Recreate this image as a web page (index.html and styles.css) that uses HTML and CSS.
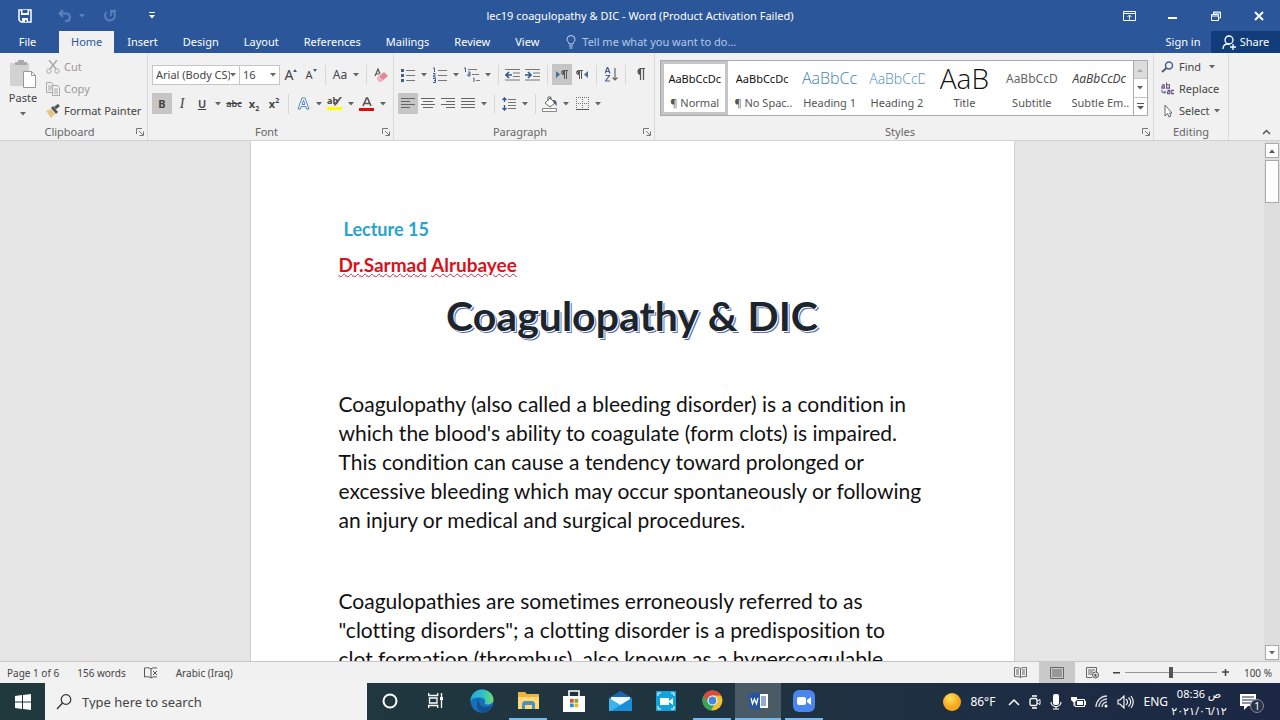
FILE: index.html
```html
<!DOCTYPE html>
<html lang="en">
<head>
<meta charset="utf-8">
<title>lec19 coagulopathy &amp; DIC - Word</title>
<link rel="stylesheet" href="styles.css">
</head>
<body>
<svg class="sprite" aria-hidden="true">
  <symbol id="caret" viewBox="0 0 6 4"><path d="M0 0h6L3 3.5z"/></symbol>
  <symbol id="launch" viewBox="0 0 8 8"><path d="M.5 6V.5H6M3 3l4 4M7.500 3.500v4h-4" fill="none" stroke="#777"/></symbol>
</svg>

<header class="top">
  <div class="titlebar">
    <div class="quick">
      <button class="q-save" aria-label="Save"><svg width="14" height="14" viewBox="0 0 14 14"><path d="M1 1h12v12H3L1 11z" fill="none" stroke="#fff" stroke-width="1.500"/><path d="M3 1h8v5H3zM4 9h6v4H4z" fill="#fff"/><path d="M4.500 1h5v3h-5zM7 11h1.500v2H7z" fill="#2b579a"/></svg></button>
      <button class="q-undo dim" aria-label="Undo"><svg width="14" height="14" viewBox="0 0 14 14"><path d="M5 1L1.500 4.500 5 8M2 4.500h6c5 0 5 7 1 7.500H7" fill="none" stroke="currentColor" stroke-width="2"/></svg><svg class="caret" width="6" height="4"><use href="#caret"/></svg></button>
      <button class="q-redo dim" aria-label="Repeat"><svg width="14" height="14" viewBox="0 0 14 14"><path d="M3.500 3a5 5 0 1 0 6.500-.5M8 7V2h5" fill="none" stroke="currentColor" stroke-width="1.800"/></svg></button>
      <button class="q-more" aria-label="Customize"><svg width="6" height="7" viewBox="0 0 6 7"><path d="M0 0h6v1H0zM0 3h6L3 6.500z" fill="#fff"/></svg></button>
    </div>
    <h1 class="title">lec19 coagulopathy &amp; DIC - Word (Product Activation Failed)</h1>
    <div class="winctl">
      <button aria-label="Ribbon options"><svg width="13" height="10" viewBox="0 0 13 10"><path d="M.5.5h12v9H.5zM.5 2.500h12M6.500 8.500v-4M4.500 6l2-2 2 2" fill="none" stroke="#fff"/></svg></button>
      <button aria-label="Minimize"><svg width="9" height="10" viewBox="0 0 9 10"><path d="M0 6h9v2H0z" fill="#fff"/></svg></button>
      <button aria-label="Restore"><svg width="10" height="10" viewBox="0 0 10 10"><path d="M.5 3.500h7v6h-7zM.5 5h7M2.500 3V1h7v6H8M2.500 2h7" fill="none" stroke="#fff"/></svg></button>
      <button aria-label="Close"><svg width="10" height="10" viewBox="0 0 10 10"><path d="M1 1l8 8M9 1L1 9" stroke="#fff" stroke-width="2"/></svg></button>
    </div>
  </div>
  <nav class="tabs">
    <button class="tab file">File</button>
    <button class="tab active">Home</button>
    <button class="tab">Insert</button>
    <button class="tab">Design</button>
    <button class="tab">Layout</button>
    <button class="tab">References</button>
    <button class="tab">Mailings</button>
    <button class="tab">Review</button>
    <button class="tab">View</button>
    <label class="tell"><svg width="10" height="14" viewBox="0 0 10 14"><path d="M3 9C3 7 1 6.500 1 4.500a4 4 0 0 1 8 0C9 6.500 7 7 7 9zM3 11h4M3.500 13h3" fill="none" stroke="#c3d3ec"/></svg><input type="text" placeholder="Tell me what you want to do..."></label>
    <button class="signin">Sign in</button>
    <button class="share"><svg width="15" height="15" viewBox="0 0 15 15"><circle cx="7" cy="5" r="4" fill="none" stroke="#fff" stroke-width="1.300"/><path d="M1 14c0-3 2-5 5-5h2M8 12h6M11 9v6" fill="none" stroke="#fff" stroke-width="1.300"/></svg>Share</button>
  </nav>
</header>

<section class="ribbon">
  <div class="group clipboard">
    <div class="body clip">
      <button class="paste"><svg width="27" height="28" viewBox="0 0 27 28"><path d="M0 3h19v23H0z" fill="#d4d1d4"/><path d="M5 5V2h3V0h6v2h3v3z" fill="#aaa"/><path d="M13.500 11.500h8l4 4v12h-12z" fill="#fff" stroke="#999"/><path d="M21.500 11.500v4h4" fill="none" stroke="#999"/></svg><span>Paste</span><svg class="caret" width="6" height="4"><use href="#caret"/></svg></button>
      <div class="stack">
        <button class="off"><svg width="14" height="14" viewBox="0 0 14 14"><path d="M3 0l7 9M11 0L4 9" stroke="#aaa" stroke-width="1.500"/><circle cx="3" cy="11" r="2.200" fill="none" stroke="#aaa"/><circle cx="11" cy="11" r="2.200" fill="none" stroke="#aaa"/></svg>Cut</button>
        <button class="off"><svg width="14" height="14" viewBox="0 0 14 14"><path d="M.5.5h5l2 2v8h-7zM2 4h4M2 6h4M2 8h3" fill="none" stroke="#aaa"/><path d="M6.500 3.500h5l2 2v8h-7z" fill="#f1f1f1" stroke="#aaa"/><path d="M8 7h4M8 9h4M8 11h4" stroke="#aaa"/></svg>Copy</button>
        <button><svg width="14" height="14" viewBox="0 0 14 14"><path d="M0 7l5-2 4 5-4 4z" fill="#e7c67f"/><path d="M5 4l2-2 5 6-2 2z" fill="#555"/><path d="M9 4l4-3" stroke="#555" stroke-width="3"/></svg>Format Painter</button>
      </div>
    </div>
    <div class="caption"><span>Clipboard</span><button aria-label="Clipboard settings"><svg width="8" height="8"><use href="#launch"/></svg></button></div>
  </div>

  <div class="group font">
    <div class="body">
      <div class="row">
        <span class="pick face"><select aria-label="Font"><option>Arial (Body CS)</option></select><svg class="caret" width="6" height="4"><use href="#caret"/></svg></span>
        <span class="pick size"><select aria-label="Font size"><option>16</option></select><svg class="caret" width="6" height="4"><use href="#caret"/></svg></span>
        <button class="ic glyph" aria-label="Grow font"><span class="big">A</span><svg width="4" height="12" viewBox="0 0 4 12"><path d="M0 3h4L2 0z" fill="#3a5f95"/></svg></button>
        <button class="ic glyph" aria-label="Shrink font"><span>A</span><svg width="4" height="12" viewBox="0 0 4 12"><path d="M0 0h4L2 3z" fill="#3a5f95"/></svg></button>
        <i class="sep"></i>
        <button class="ic case">Aa</button><button class="dd" aria-label="Case"><svg class="caret" width="6" height="4"><use href="#caret"/></svg></button>
        <i class="sep"></i>
        <button class="ic" aria-label="Clear formatting"><svg width="14" height="14" viewBox="0 0 14 14"><path d="M1 8L4 1l2 5M2 6h3" fill="none" stroke="#555" stroke-width="1.200"/><path d="M3 10l7-6 4 4-7 6H5z" fill="#e8869b"/><path d="M3 10l2-2 4 4-2 2H5z" fill="#f3b6c1"/></svg></button>
      </div>
      <div class="row">
        <button class="ic on"><b>B</b></button>
        <button class="ic serif"><i>I</i></button>
        <button class="ic semi"><u>U</u></button><button class="dd" aria-label="Underline style"><svg class="caret" width="6" height="4"><use href="#caret"/></svg></button>
        <button class="ic small semi"><s>abc</s></button>
        <button class="ic"><b>x<sub>2</sub></b></button>
        <button class="ic"><b>x<sup>2</sup></b></button>
        <i class="sep"></i>
        <button class="ic" aria-label="Text effects"><svg width="13" height="13" viewBox="0 0 13 13"><path d="M1 12L5 1h3l4 11H9.500L9 9.500H4L3.500 12zM5 7.500h3L6.500 3z" fill="#fff" stroke="#5584bd"/></svg></button><button class="dd" aria-label="Effects"><svg class="caret" width="6" height="4"><use href="#caret"/></svg></button>
        <button class="ic small hl" aria-label="Highlight"><span>ab</span><svg width="16" height="14" viewBox="0 0 16 14"><path d="M15 0L9 8l-2 1 .5-2.500L13 0z" fill="#555"/><path d="M0 10h15v3H0z" fill="#ff0"/></svg></button><button class="dd" aria-label="Highlight color"><svg class="caret" width="6" height="4"><use href="#caret"/></svg></button>
        <button class="ic" aria-label="Font color"><svg width="16" height="16" viewBox="0 0 16 16"><path d="M4 10L7.500 2h1L12 10M5.500 7.500h5" fill="none" stroke="#555" stroke-width="1.600"/><path d="M0 12h15v3H0z" fill="#e00b0b"/></svg></button><button class="dd" aria-label="Font colors"><svg class="caret" width="6" height="4"><use href="#caret"/></svg></button>
      </div>
    </div>
    <div class="caption"><span>Font</span><button aria-label="Font settings"><svg width="8" height="8"><use href="#launch"/></svg></button></div>
  </div>

  <div class="group para">
    <div class="body">
      <div class="row">
        <button class="ic" aria-label="Bullets"><svg width="14" height="14" viewBox="0 0 14 14"><path d="M0 1h3v3H0zM0 6h3v3H0zM0 11h3v3H0z" fill="#44618c"/><path d="M5 2.500h9M5 7.500h9M5 12.500h9" stroke="#777"/></svg></button><button class="dd" aria-label="Bullet styles"><svg class="caret" width="6" height="4"><use href="#caret"/></svg></button>
        <button class="ic" aria-label="Numbering"><svg width="14" height="16" viewBox="0 0 14 16"><path d="M0 1h1.500v4M0 6.500h2v2H.5v1.500H3M0 11.500h2.500v4H0M1 13.500h1.500" fill="none" stroke="#44618c"/><path d="M5 3.500h9M5 8.500h9M5 13.500h9" stroke="#777"/></svg></button><button class="dd" aria-label="Number styles"><svg class="caret" width="6" height="4"><use href="#caret"/></svg></button>
        <button class="ic" aria-label="Multilevel list"><svg width="16" height="16" viewBox="0 0 16 16"><path d="M0 1h1.500v4M4 5h2v4H4V7h2M9 11h1v4" fill="none" stroke="#44618c"/><path d="M4 2.500h9M8 7.500h7M12 13.500h4" stroke="#777"/></svg></button><button class="dd" aria-label="List styles"><svg class="caret" width="6" height="4"><use href="#caret"/></svg></button>
        <i class="sep"></i>
        <button class="ic" aria-label="Decrease indent"><svg width="16" height="12" viewBox="0 0 16 12"><path d="M0 .5h15M8 4h7M8 7.500h7M0 11h15" stroke="#777"/><path d="M7 6H1M4 3L1 6l3 3" fill="none" stroke="#31598f" stroke-width="1.600"/></svg></button>
        <button class="ic" aria-label="Increase indent"><svg width="16" height="12" viewBox="0 0 16 12"><path d="M0 .5h15M8 4h7M8 7.500h7M0 11h15" stroke="#777"/><path d="M0 6h6M3 3l3 3-3 3" fill="none" stroke="#31598f" stroke-width="1.600"/></svg></button>
        <i class="sep"></i>
        <button class="ic on" aria-label="Left to right"><svg width="13" height="10" viewBox="0 0 13 10"><path d="M0 1l4 3.500L0 8z" fill="#44709f"/><path d="M12 .5H7.500a2 2 0 0 0 0 4h1V1M8.500 1v8M10.500 1v8" fill="none" stroke="#555"/><path d="M6 1h3v3.500H7z" fill="#555"/></svg></button>
        <button class="ic" aria-label="Right to left"><svg width="13" height="10" viewBox="0 0 13 10"><path d="M12 1L8 4.500 12 8z" fill="#44709f"/><path d="M7 .5H2.500a2 2 0 0 0 0 4M3.500 1v8M5.500 1v8" fill="none" stroke="#555"/><path d="M1 1h3v3.500H2z" fill="#555"/></svg></button>
        <i class="sep"></i>
        <button class="ic" aria-label="Sort"><svg width="13" height="15" viewBox="0 0 13 15"><path d="M0 6.500L2.500 0 5 6.500M1 4.500h3M.5 8.500h4L.5 14h4.500" fill="none" stroke="#44618c" stroke-width="1.200"/><path d="M10 1v12M7.500 10.500L10 13l2.500-2.500" fill="none" stroke="#666" stroke-width="1.200"/></svg></button>
        <i class="sep"></i>
        <button class="ic" aria-label="Show marks"><svg width="9" height="13" viewBox="0 0 9 13"><path d="M9 .5H4M4.500 1v11M7.500 1v11" fill="none" stroke="#555" stroke-width="1.200"/><path d="M5 0v7a3.500 3.500 0 0 1 0-7z" fill="#555"/></svg></button>
      </div>
      <div class="row">
        <button class="ic on" aria-label="Align left"><svg width="14" height="11" viewBox="0 0 14 11"><path d="M0 .5h14M0 3.500h9M0 6.500h14M0 9.500h9" stroke="#666"/></svg></button>
        <button class="ic" aria-label="Center"><svg width="14" height="11" viewBox="0 0 14 11"><path d="M0 .5h14M2 3.500h10M0 6.500h14M2 9.500h10" stroke="#666"/></svg></button>
        <button class="ic" aria-label="Align right"><svg width="14" height="11" viewBox="0 0 14 11"><path d="M0 .5h14M5 3.500h9M0 6.500h14M5 9.500h9" stroke="#666"/></svg></button>
        <button class="ic" aria-label="Justify"><svg width="14" height="11" viewBox="0 0 14 11"><path d="M0 .5h14M0 3.500h14M0 6.500h14M0 9.500h14" stroke="#666"/></svg></button><button class="dd" aria-label="Justify options"><svg class="caret" width="6" height="4"><use href="#caret"/></svg></button>
        <i class="sep"></i>
        <button class="ic" aria-label="Line spacing"><svg width="14" height="14" viewBox="0 0 14 14"><path d="M2.500 1v4M.5 3l2-2 2 2M2.500 8v5M.5 11l2 2 2-2" fill="none" stroke="#31598f" stroke-width="1.300"/><path d="M6 2.500h8M6 5.500h8M6 8.500h8M6 11.500h8" stroke="#777"/></svg></button><button class="dd" aria-label="Spacing options"><svg class="caret" width="6" height="4"><use href="#caret"/></svg></button>
        <i class="sep"></i>
        <button class="ic" aria-label="Shading"><svg width="16" height="16" viewBox="0 0 16 16"><path d="M3 7l5-5 5 5-5 4zM6 5V1h3v3" fill="#fff" stroke="#666"/><path d="M11 4c4 0 4 3 3.500 6C13 9 13 7 11 6z" fill="#44618c"/><path d="M.5 12.500h14v3H.5z" fill="#fff" stroke="#888"/></svg></button><button class="dd" aria-label="Shading colors"><svg class="caret" width="6" height="4"><use href="#caret"/></svg></button>
        <button class="ic" aria-label="Borders"><svg width="13" height="13" viewBox="0 0 13 13"><path d="M0 .5h13M0 6.500h13M.5 0v13M6.500 0v13M12.500 0v13" fill="none" stroke="#777" stroke-dasharray="1 1"/><path d="M0 12.500h13" stroke="#555"/></svg></button><button class="dd" aria-label="Border options"><svg class="caret" width="6" height="4"><use href="#caret"/></svg></button>
      </div>
    </div>
    <div class="caption"><span>Paragraph</span><button aria-label="Paragraph settings"><svg width="8" height="8"><use href="#launch"/></svg></button></div>
  </div>

  <div class="group styles">
    <div class="gallery">
      <button class="style sel"><span class="sample">AaBbCcDc</span><span>¶ Normal</span></button>
      <button class="style"><span class="sample">AaBbCcDc</span><span>¶ No Spac...</span></button>
      <button class="style"><span class="sample h1s">AaBbCc</span><span>Heading 1</span></button>
      <button class="style"><span class="sample h2s">AaBbCcD</span><span>Heading 2</span></button>
      <button class="style"><span class="sample ttl">AaB</span><span>Title</span></button>
      <button class="style"><span class="sample sub">AaBbCcD</span><span>Subtitle</span></button>
      <button class="style"><span class="sample em">AaBbCcDc</span><span>Subtle Em...</span></button>
      <div class="gscroll">
        <button class="gup" aria-label="Previous styles"><svg width="6" height="4" viewBox="0 0 6 4"><path d="M0 4h6L3 1z" fill="#aaa"/></svg></button>
        <button aria-label="Next styles"><svg class="caret" width="6" height="4"><use href="#caret"/></svg></button>
        <button aria-label="More styles"><svg width="7" height="7" viewBox="0 0 7 7"><path d="M0 0h7v1H0zM0 3h7L3.500 6.500z" fill="#555"/></svg></button>
      </div>
    </div>
    <div class="caption"><span>Styles</span><button aria-label="Styles settings"><svg width="8" height="8"><use href="#launch"/></svg></button></div>
  </div>

  <div class="group editing">
    <div class="stack">
      <button><svg width="14" height="12" viewBox="0 0 14 12"><circle cx="8" cy="4.500" r="3.500" fill="none" stroke="#44618c" stroke-width="1.500"/><path d="M5.500 7L1 11" stroke="#44618c" stroke-width="2"/></svg><span class="find">Find</span><svg class="caret" width="6" height="4"><use href="#caret"/></svg></button>
      <button><svg width="14" height="14" viewBox="0 0 15 14"><path d="M1 2.500h2.500V6H1V4h2.500M6 0v6h3V2.500H6M7 8.500h2.500V12H7v-2h2.500M14 8.500h-2.500V12H14" fill="none" stroke="#6d4f86" stroke-width="1.200"/><path d="M1 8v2.500h4M3.500 9l1.500 1.500L3.500 12" fill="none" stroke="#31598f"/></svg>Replace</button>
      <button><svg width="14" height="14" viewBox="0 0 14 14"><path d="M4 1v11l2.500-2.500L8 13l2-1-1.500-3H11z" fill="#fff" stroke="#666"/></svg>Select<svg class="caret" width="6" height="4"><use href="#caret"/></svg></button>
    </div>
    <div class="caption"><span>Editing</span></div>
  </div>
  <div class="rest"><button aria-label="Collapse ribbon"><svg width="9" height="6" viewBox="0 0 9 6"><path d="M1 5l3.500-3.500L8 5" fill="none" stroke="#555" stroke-width="1.500"/></svg></button></div>
</section>

<main class="work">
  <div class="canvas">
    <article class="page">
      <p class="lecture">Lecture 15</p>
      <p class="author"><span>Dr.Sarmad</span> <span>Alrubayee</span></p>
      <h2>Coagulopathy &amp; DIC</h2>
      <p class="text">Coagulopathy (also called a bleeding disorder) is a condition in<br>which the blood's ability to coagulate (form clots) is impaired.<br>This condition can cause a tendency toward prolonged or<br>excessive bleeding which may occur spontaneously or following<br>an injury or medical and surgical procedures.</p>
      <p class="text">Coagulopathies are sometimes erroneously referred to as<br>"clotting disorders"; a clotting disorder is a predisposition to<br>clot formation (thrombus), also known as a hypercoagulable</p>
    </article>
  </div>
  <div class="scroll">
    <button aria-label="Scroll up"><svg width="6" height="4" viewBox="0 0 6 4"><path d="M0 4h6L3 .5z" fill="#555"/></svg></button>
    <div class="thumb"></div>
    <button class="down" aria-label="Scroll down"><svg class="caret" width="6" height="4"><use href="#caret"/></svg></button>
  </div>
</main>

<footer class="status">
  <span>Page 1 of 6</span>
  <span>156 words</span>
  <svg width="14" height="12" viewBox="0 0 14 12"><path d="M7 2C5 .5 3 .5.500 1v9C3 9.500 5 9.500 7 11zM7 2c1-1 3-1.500 6-1M7 11c1-1 3-1.500 6-1M9 4l4 4M13 4L9 8" fill="none" stroke="#555"/></svg>
  <span>Arabic (Iraq)</span>
  <div class="views">
    <button aria-label="Read mode"><svg width="13" height="11" viewBox="0 0 13 11"><path d="M6.500 1.500C5 .5 3 .5.500.5v9c2.500 0 4.500 0 6 1 1.500-1 3.500-1 6-1v-9c-2.500 0-4.500 0-6 1zv9M2 3h3M2 5h3M2 7h3M8 3h3M8 5h3M8 7h3" fill="none" stroke="#666"/></svg></button>
    <button class="cur" aria-label="Print layout"><svg width="14" height="12" viewBox="0 0 14 12"><path d="M.5.500h13v11H.5zM2 3h10M2 5h10M2 7h10M2 9h10" fill="none" stroke="#666"/></svg></button>
    <button aria-label="Web layout"><svg width="14" height="12" viewBox="0 0 14 12"><path d="M6 10.500H.5V.5h10V5M2 3h7M2 5h5M2 7h4" fill="none" stroke="#666"/><circle cx="9.500" cy="8" r="3" fill="#eee" stroke="#555"/><path d="M8 7h2l1 2-2 1z" fill="#555"/></svg></button>
  </div>
  <div class="zoom">
    <button aria-label="Zoom out"><svg width="7" height="7" viewBox="0 0 7 7"><path d="M0 3h7v1.500H0z" fill="#444"/></svg></button>
    <input type="range" aria-label="Zoom" min="0" max="100" value="50">
    <button aria-label="Zoom in"><svg width="7" height="7" viewBox="0 0 7 7"><path d="M0 3h7M3.500 0v7" stroke="#444" stroke-width="1.500"/></svg></button>
    <span class="pct">100 %</span>
  </div>
</footer>

<div class="taskbar">
  <button class="start" aria-label="Start"><svg width="16" height="16" viewBox="0 0 16 16"><path d="M0 2l7-1v6.500H0zM8 1l8-1v7.500H8zM0 8.500h7V15l-7-1zM8 8.500h8V16l-8-1z" fill="#fff"/></svg></button>
  <label class="search"><svg width="16" height="16" viewBox="0 0 16 16"><circle cx="10" cy="5.500" r="4.800" fill="none" stroke="#333" stroke-width="1.200"/><path d="M6.500 9L1 15" stroke="#333" stroke-width="1.300"/></svg><input type="text" placeholder="Type here to search"></label>
  <div class="apps">
    <button aria-label="Cortana"><svg width="16" height="16" viewBox="0 0 16 16"><circle cx="8" cy="8" r="6.500" fill="none" stroke="#fff" stroke-width="2"/></svg></button>
    <button aria-label="Task view"><svg width="16" height="15" viewBox="0 0 16 15"><path d="M.7 0v2.500h9V0M.7 15v-2.500h9V15M1.500 5h7.500v5H1.500zM13.500 0v15" fill="none" stroke="#fff" stroke-width="1.300"/><path d="M12 4h3v3h-3z" fill="#fff"/></svg></button>
    <button aria-label="Edge"><svg width="24" height="24" viewBox="0 0 24 24"><defs><linearGradient id="eg" x1="0" y1="0" x2="1" y2="0"><stop offset="0" stop-color="#2aa7df"/><stop offset=".6" stop-color="#35c1c0"/><stop offset="1" stop-color="#74dc62"/></linearGradient></defs><circle cx="12" cy="12" r="11.500" fill="#1671bd"/><path d="M.5 12C1 5 6 .5 12 .5S23.500 5 23.500 11c0 4-7 6-9 3.500 2-2 0-6-4-6C6 8 2 9 .5 12z" fill="url(#eg)"/><path d="M10 9c-3 4 0 9 5 9 3 0 5-1 7-2-2 5-6 7.500-10 7.500C6 22 5 13 10 9z" fill="#174f94"/></svg></button>
    <button class="run" aria-label="File Explorer"><svg width="21" height="19" viewBox="0 0 21 19"><path d="M0 1h7l2 2h12v15H0z" fill="#eeb43b"/><path d="M0 6h21v12H0z" fill="#ffda73"/><path d="M4 18v-6l2-2h9l2 2v6h-3v-4H7v4z" fill="#4c91bf"/></svg></button>
    <button aria-label="Store"><svg width="22" height="22" viewBox="0 0 22 22"><path d="M6 7V1h10v6" fill="none" stroke="#fff" stroke-width="1.600"/><path d="M0 6h22v16H0z" fill="#fff"/><path d="M7 9h3.700v3.700H7z" fill="#e3502a"/><path d="M11.500 9h3.700v3.700h-3.700z" fill="#78ad29"/><path d="M7 13.500h3.700v3.700H7z" fill="#2195cf"/><path d="M11.500 13.500h3.700v3.700h-3.700z" fill="#f2b21d"/></svg></button>
    <button aria-label="Mail"><svg width="23" height="20" viewBox="0 0 23 20"><path d="M0 7l11.500-7L23 7v12H0z" fill="#1666b3"/><path d="M2 6h19v10H2z" fill="#eef7fc"/><path d="M0 7l11.500 7L23 7v13H0z" fill="#39b4ed"/><path d="M23 7v13H2z" fill="#178fd8"/></svg></button>
    <button aria-label="Camera meeting"><svg width="20" height="20" viewBox="0 0 20 20"><path d="M0 0h20v20H0z" fill="#12a2dc"/><path d="M4 7h9v7H4zM13 10l4-3v7l-4-3z" fill="#fff"/><path d="M2 5V2h3M15 2h3v3M2 15v3h3M15 18h3v-3" fill="none" stroke="#fff"/></svg></button>
    <button class="run" aria-label="Chrome"><svg width="21" height="21" viewBox="0 0 21 21"><circle cx="10.500" cy="10.500" r="10" fill="#eebf32"/><path d="M10.500 10.500L1.800 5.500A10 10 0 0 0 9 20.400L14 12z" fill="#3ca35b"/><path d="M1.800 5.500A10 10 0 0 1 19.200 5.500H10.500l-4 7z" fill="#dd4a3b"/><circle cx="10.500" cy="10.500" r="5" fill="#fff"/><circle cx="10.500" cy="10.500" r="3.900" fill="#4285e5"/></svg></button>
    <button class="run cur" aria-label="Word"><svg width="19" height="18" viewBox="0 0 19 18"><path d="M10 2h9v14h-9z" fill="#fff"/><path d="M12 5h5M12 7h5M12 9h5M12 11h5M12 13h5" stroke="#2b579a"/><path d="M0 2l11-2v18L0 16z" fill="#2454a3"/><path d="M2 6l1.500 6L5.500 7l2 5L9 6" fill="none" stroke="#fff" stroke-width="1.300"/></svg></button>
    <button class="run" aria-label="Zoom"><svg width="22" height="22" viewBox="0 0 22 22"><rect width="22" height="22" rx="6" fill="#4a86ed"/><rect x="4" y="7" width="9" height="8" rx="2" fill="#fff"/><path d="M14 10l4-3v8l-4-3z" fill="#fff"/></svg></button>
  </div>
  <div class="tray">
    <svg width="18" height="18" viewBox="0 0 18 18"><defs><radialGradient id="sn" cx=".4" cy=".3"><stop offset="0" stop-color="#ffe25c"/><stop offset="1" stop-color="#f8a61b"/></radialGradient></defs><circle cx="9" cy="9" r="9" fill="url(#sn)"/></svg>
    <span class="temp">86°F</span>
    <svg width="12" height="8" viewBox="0 0 12 8"><path d="M1 7l5-5 5 5" fill="none" stroke="#fff" stroke-width="1.500"/></svg>
    <svg width="12" height="14" viewBox="0 0 12 14"><path d="M3 1h5M3 13h5" stroke="#fff" stroke-width="1.300"/><rect x="1" y="3.500" width="7" height="7" rx="1.500" fill="none" stroke="#fff" stroke-width="1.300"/><path d="M8 6l3-1.500v5L8 8" fill="none" stroke="#fff"/></svg>
    <svg width="12" height="16" viewBox="0 0 12 16"><rect x="3" width="6" height="11" rx="2" fill="#fff"/><path d="M1 8c0 6 10 6 10 0M6 12v3M3 15h6" fill="none" stroke="#fff" stroke-width="1.200"/></svg>
    <svg width="15" height="12" viewBox="0 0 15 12"><path d="M3.500 3.500h10v7H4z" fill="none" stroke="#fff"/><path d="M6 5h6v4H6zM14 5h1v4h-1zM0 1h6v3L4 6H2L0 4z" fill="#fff"/><path d="M3 6v4" stroke="#fff"/></svg>
    <svg width="13" height="13" viewBox="0 0 13 13"><path d="M1 12A11 11 0 0 1 12 1M4 12a8 8 0 0 1 8-8M7 12a5 5 0 0 1 5-5" fill="none" stroke="#d5dae0" stroke-width="1.300"/><circle cx="11" cy="11" r="1.500" fill="#fff"/></svg>
    <svg width="17" height="14" viewBox="0 0 17 14"><path d="M1 5h2l4-4v12L3 9H1zM9 4c2 2 2 4 0 6M11.500 2.500c3 3 3 6 0 9M14 1c3 4 3 8 0 12" fill="none" stroke="#fff" stroke-width="1.100"/></svg>
    <span class="lang">ENG</span>
    <div class="clock"><span>08:36 ص</span><span>٢٠٢١/٠٦/١٢</span></div>
    <div class="note"><svg width="16" height="16" viewBox="0 0 16 16"><path d="M0 0h16v12H8l-4 4v-4H0z" fill="#fff"/><path d="M2 3h12M2 6h12M2 9h9" stroke="#1b2a45"/></svg><span>1</span></div>
  </div>
</div>
</body>
</html>
```
FILE: styles.css
```css
* { box-sizing: border-box; }
body {
  margin: 0;
  height: 100vh;
  display: flex;
  flex-direction: column;
  overflow: hidden;
  font: 11px/14px "Noto Sans", "Open Sans", sans-serif;
  color: #444;
  background: #e6e6e6;
}
button {
  display: flex;
  align-items: center;
  justify-content: center;
  padding: 0;
  border: 0;
  background: none;
  color: inherit;
  font: inherit;
  white-space: nowrap;
}
input, select { font: inherit; color: inherit; border: 0; background: none; padding: 0; }
svg { flex: none; }
.sprite { position: absolute; width: 0; height: 0; }
.caret { fill: #666; }

/* title bar and tabs */
.top { background: #2b579a; color: #fff; flex: none; }
.titlebar { display: grid; grid-template-columns: 1fr auto 1fr; align-items: center; height: 31px; }
.title { margin: 0; font-size: 11px; font-weight: 400; }
.quick { display: flex; align-items: center; padding-left: 18px; gap: 18px; }
.q-undo { gap: 7px; margin-left: 8px; }
.q-more { margin-left: 14px; }
.dim { color: #5b80bb; }
.dim .caret { fill: #5b80bb; }
.winctl { display: flex; justify-content: flex-end; }
.winctl button { width: 43px; height: 30px; }
.tabs { display: flex; align-items: stretch; gap: 1px; height: 22px; }
.tab { padding: 0 12px; }
.file { width: 55px; margin-right: 3px; }
.tab.active { background: #f1f1f1; color: #2b579a; }
.tell { display: flex; align-items: center; gap: 6px; flex: 1; padding-left: 14px; }
.tell input { flex: 1; }
.tell input::placeholder { color: #b5c8e6; opacity: 1; }
.signin { width: 54px; }
.share { width: 69px; gap: 3px; background: #133d7a; }

/* ribbon */
.ribbon { display: flex; flex: none; height: 88px; background: #f1f1f1; border-bottom: 1px solid #d2d2d2; }
.group { display: flex; flex-direction: column; justify-content: space-between; padding: 7px 4px 1px; border-right: 1px solid #dadada; }
.caption { display: flex; align-items: center; height: 14px; color: #666; }
.caption span { flex: 1; text-align: center; }
.caption button { width: 10px; height: 12px; }
.clipboard { width: 148px; padding-right: 2px; }
.font { width: 246px; padding-right: 2px; }
.para { width: 261px; padding-right: 2px; }
.styles { flex: 1; min-width: 0; padding-right: 2px; }
.editing { width: 75px; }
.rest { width: 51px; display: flex; align-items: flex-end; justify-content: flex-end; padding: 5px 9px; }
.body { display: flex; flex-direction: column; gap: 8px; padding-top: 4px; }
.clip { flex-direction: row; gap: 4px; padding: 0; }
.paste { flex-direction: column; width: 38px; gap: 3px; justify-content: flex-start; }
.paste .caret { margin-top: 4px; }
.stack { display: flex; flex-direction: column; gap: 8px; }
.stack button { gap: 4px; justify-content: flex-start; height: 14px; }
.off { color: #999; }
.row { display: flex; align-items: center; height: 21px; }
.pick { display: flex; align-items: center; height: 20px; border: 1px solid #c6c6c6; background: #fff; padding: 0 3px; }
.pick select { appearance: none; flex: 1; min-width: 0; width: 0; overflow: hidden; }
.face { width: 88px; }
.size { width: 40px; border-left: 0; margin-right: 1px; }
.ic { width: 20px; height: 21px; }
.dd { width: 12px; height: 21px; }
.on { background: #c6c6c6; }
.sep { width: 1px; height: 20px; margin: 0 4px; background: #d8d8d8; }
.glyph .big { font-size: 14px; }
.case { font-size: 12px; }
.semi { font-weight: 600; }
.small { font-size: 9px; }
.serif { font-family: "Liberation Serif", serif; font-size: 14px; }
.ic sub, .ic sup { font-size: 7px; line-height: 0; }
.hl { display: grid; place-items: center; }
.hl > * { grid-area: 1 / 1; }
.hl span { align-self: start; justify-self: start; line-height: 16px; font-weight: 700; }

.gallery { display: flex; height: 56px; border: 1px solid #ababab; background: #fff; margin: 0 3px 0 1px; }
.style { flex: 1 1 0; min-width: 0; flex-direction: column; justify-content: flex-start; gap: 3px; padding: 0 3px; border: 3px solid transparent; overflow: hidden; color: #555; }
.sel { border-color: #c5c5c5; }
.style > span { max-width: 100%; }
.sample { height: 29px; line-height: 29px; overflow: hidden; color: #111; }
.style > span + span { line-height: 14px; }
.h1s { font-size: 16px; color: #3f7fb3; }
.h2s { font-size: 14px; color: #4a8cc0; }
.h1s, .h2s, .ttl { font-family: "Open Sans", sans-serif; font-weight: 300; }
.ttl { font-size: 28px; }
.sub { font-size: 12px; color: #666; }
.em { font-size: 12px; font-style: italic; color: #444; }
.gscroll { width: 14px; display: flex; flex-direction: column; border-left: 1px solid #ababab; }
.gscroll button { flex: 1; border-top: 1px solid #c6c6c6; }
.gscroll .gup { background: #dcdcdc; border-top: 0; }
.editing .stack { padding-left: 3px; }
.find { margin-right: 4px; }

/* document */
.work { flex: 1; min-height: 0; display: flex; background: #e6e6e6; }
.canvas { flex: 1; display: flex; justify-content: center; align-items: flex-start; overflow: hidden; }
.page { width: 765px; padding: 75px 88px 0; background: #fff; border: 1px solid #cfcfcf; border-top: 0; color: #111; font-family: Lato, sans-serif; font-variant-ligatures: none; }
.page p, .page h2 { margin: 0; }
.page .lecture { padding-left: 5px; font-size: 18px; line-height: 26px; font-weight: 700; color: #28a3cf; }
.page .author { margin-top: 10px; font-size: 19px; line-height: 26px; font-weight: 700; color: #dc101a; }
.author span { text-decoration: underline wavy #c22c4c 1px; }
.page h2 { margin: 10px 0 45px; font-size: 41px; line-height: 56px; text-align: center; color: #1c242c; text-shadow: 1px 1px 0 #fff, 2px 2px 0 #5c6cae; }
.page .text { margin-bottom: 52px; font-size: 21px; line-height: 29px; white-space: nowrap; }
.scroll { width: 16px; display: flex; flex-direction: column; gap: 2px; padding: 2px 1px 1px; background: #dedede; }
.scroll button { width: 14px; height: 15px; background: #fff; border: 1px solid #ababab; }
.thumb { height: 43px; background: #fff; border: 1px solid #ababab; }
.scroll .down { margin-top: auto; }

/* status bar */
.status { display: flex; align-items: center; gap: 18px; flex: none; height: 22px; padding-left: 7px; background: #f1f1f1; border-top: 1px solid #c6c6c6; font-size: 10px; }
.views { display: flex; margin-left: auto; }
.views button { width: 36px; height: 21px; }
.views .cur { background: #c9c9c9; }
.zoom { display: flex; align-items: center; gap: 3px; margin-left: -16px; padding-right: 8px; }
.zoom input { appearance: none; width: 92px; height: 14px; margin: 0 2px; background: linear-gradient(#999, #999) center / 100% 1px no-repeat; }
.zoom input::-webkit-slider-thumb { appearance: none; width: 4px; height: 11px; background: #555; }
.pct { margin-left: 12px; }

/* taskbar */
.taskbar { display: flex; flex: none; height: 37px; background: linear-gradient(90deg, #20393d, #203440 55%, #1b2745); color: #fff; }
.start { width: 45px; }
.search { display: flex; align-items: center; gap: 10px; width: 322px; padding-left: 11px; background: #f2f2f2; color: #333; font-size: 13px; }
.search input { flex: 1; min-width: 0; }
.search input::placeholder { color: #444; opacity: 1; }
.apps { display: flex; }
.apps button { width: 46px; border-bottom: 2px solid transparent; }
.apps .run { background: linear-gradient(#76b9ed, #76b9ed) bottom / 38px 2px no-repeat border-box; }
.apps .cur { background: linear-gradient(#76b9ed, #76b9ed) bottom / 100% 2px no-repeat border-box #4a5b66; }
.tray { display: flex; align-items: center; gap: 9px; margin-left: auto; padding-right: 16px; }
.temp { margin-right: 4px; font-size: 12px; }
.lang { font-size: 12px; }
.clock { display: flex; flex-direction: column; align-items: center; width: 56px; margin: 0 4px 0 -6px; line-height: 17px; white-space: nowrap; font-family: "Noto Sans", "DejaVu Sans", sans-serif; }
.note { position: relative; display: flex; width: 24px; }
.note span { position: absolute; left: 10px; top: 5px; width: 14px; height: 14px; border: 1px solid #889; border-radius: 50%; background: #27334a; font-size: 10px; line-height: 12px; text-align: center; }
```
